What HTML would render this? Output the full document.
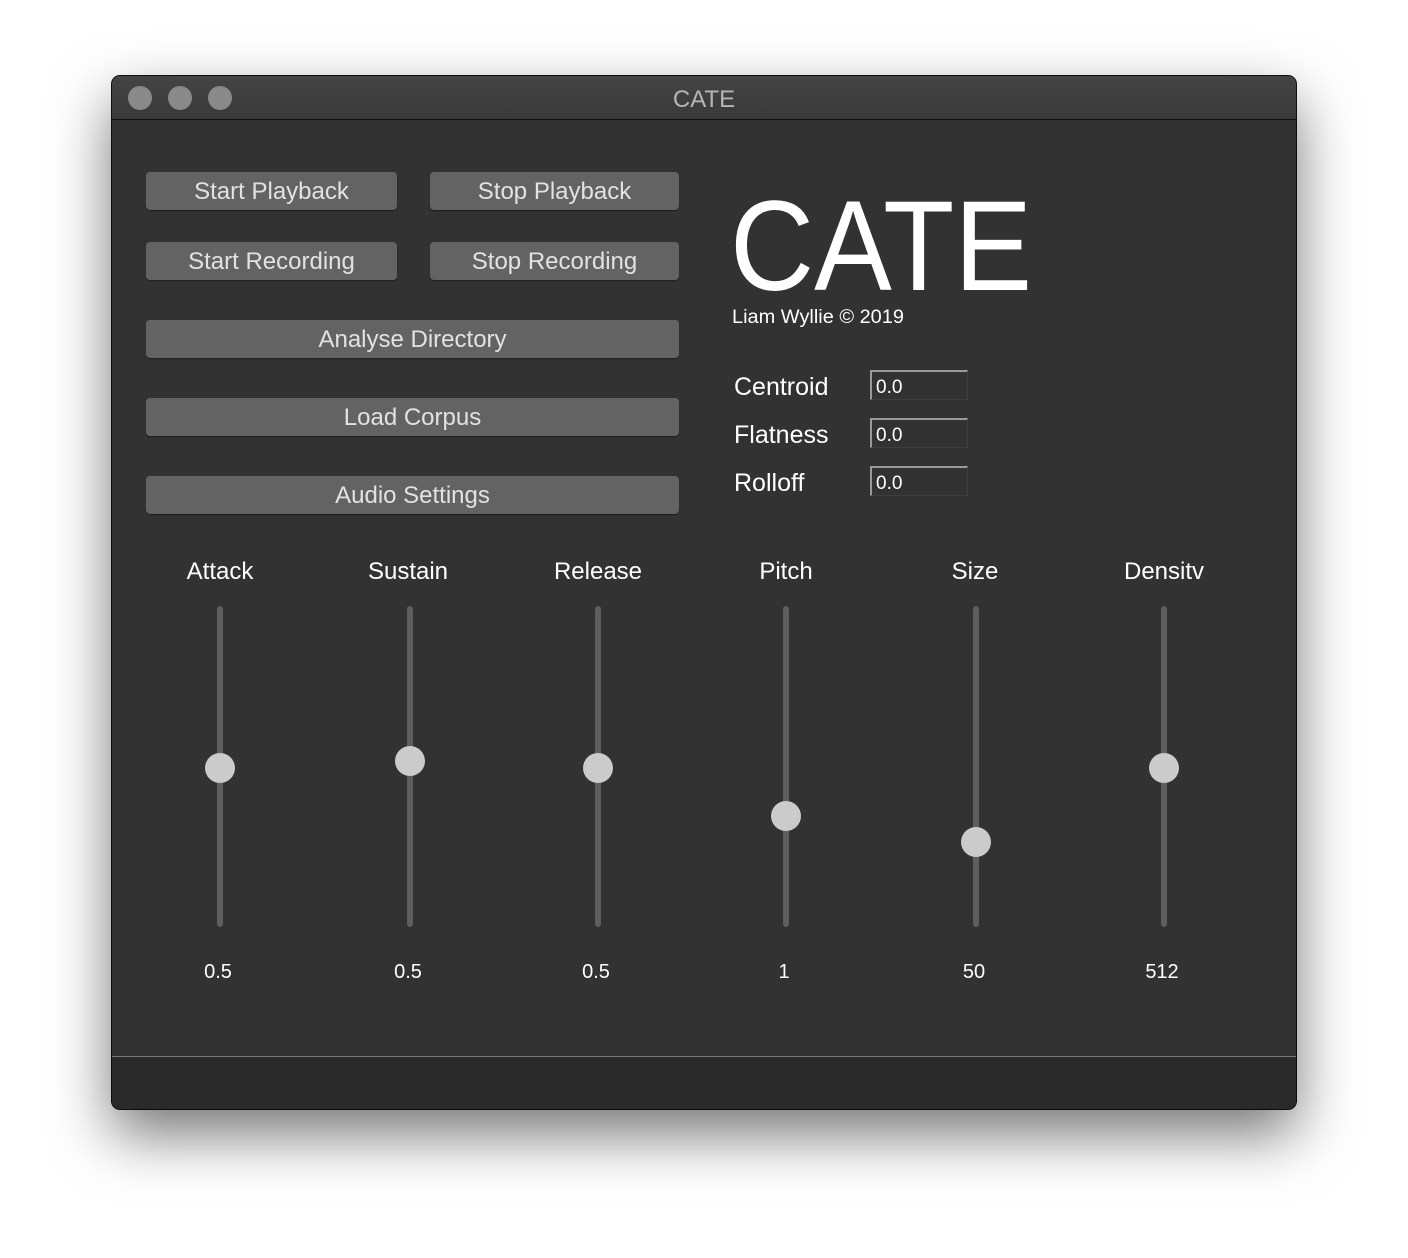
<!DOCTYPE html>
<html><head><style>
body{margin:0;width:1408px;height:1258px;background:#fff;position:relative;overflow:hidden;font-family:"Liberation Sans",sans-serif}
.win{position:absolute;left:112px;top:76px;width:1184px;height:1033px;background:#323232;border-radius:8px;box-shadow:0 25px 60px rgba(0,0,0,.55),0 0 0 1px #111;overflow:hidden}
.tb{position:absolute;left:0;top:0;width:1184px;height:43px;background:linear-gradient(#444,#3a3a3a);border-bottom:1px solid #111}
.dot{position:absolute;top:10px;width:24px;height:24px;border-radius:50%;background:#8a8a8a}
.title{position:absolute;left:0;right:0;top:10px;text-align:center;color:#b5b5b5;font-size:24px}
.btn{position:absolute;height:38px;background:#636363;border-radius:4px;color:#e2e2e2;font-size:24px;line-height:40px;text-align:center;box-shadow:0 1px 1px rgba(0,0,0,.4)}
.t{position:absolute;color:#fff}
.fld{position:absolute;left:758px;width:98px;height:30px;border-top:2px solid #999;border-left:2px solid #999;border-right:1px solid #3e3e3e;border-bottom:1px solid #3e3e3e;color:#fff;font-size:19px;line-height:31px;padding-left:4px;box-sizing:border-box}
.lbl{position:absolute;width:160px;text-align:center;color:#fff;font-size:24px;top:482px}
.val{position:absolute;width:160px;text-align:center;color:#fff;font-size:20px;top:885px}
.trk{position:absolute;top:530px;width:6px;height:321px;background:#5e5e5e;border-radius:3px}
.th{position:absolute;width:30px;height:30px;border-radius:50%;background:#cbcbcb}
.bot{position:absolute;left:0;top:980px;width:1184px;height:53px;background:#2a2a2a;border-top:1px solid #777}
</style></head><body>
<div class="win">
<div class="tb"><div class="dot" style="left:16px"></div><div class="dot" style="left:56px"></div><div class="dot" style="left:96px"></div><div class="title">CATE</div></div>
<div class="btn" style="left:34px;top:96px;width:251px">Start Playback</div>
<div class="btn" style="left:318px;top:96px;width:249px">Stop Playback</div>
<div class="btn" style="left:34px;top:166px;width:251px">Start Recording</div>
<div class="btn" style="left:318px;top:166px;width:249px">Stop Recording</div>
<div class="btn" style="left:34px;top:244px;width:533px">Analyse Directory</div>
<div class="btn" style="left:34px;top:322px;width:533px">Load Corpus</div>
<div class="btn" style="left:34px;top:400px;width:533px">Audio Settings</div>
<div class="t" style="left:618px;top:98px;font-size:128px;line-height:146px;transform:scaleX(.91);transform-origin:0 0">CATE</div>
<div class="t" style="left:620px;top:231px;font-size:19px;transform:scaleX(1.05);transform-origin:0 0">Liam Wyllie © 2019</div>
<div class="t" style="left:622px;top:297px;font-size:25px">Centroid</div>
<div class="t" style="left:622px;top:345px;font-size:25px">Flatness</div>
<div class="t" style="left:622px;top:393px;font-size:25px">Rolloff</div>
<div class="fld" style="top:294px">0.0</div>
<div class="fld" style="top:342px">0.0</div>
<div class="fld" style="top:390px">0.0</div>

<div class="lbl" style="left:28px">Attack</div><div class="trk" style="left:105px"></div><div class="th" style="left:93px;top:677px"></div><div class="val" style="left:26px">0.5</div>
<div class="lbl" style="left:216px">Sustain</div><div class="trk" style="left:295px"></div><div class="th" style="left:283px;top:670px"></div><div class="val" style="left:216px">0.5</div>
<div class="lbl" style="left:406px">Release</div><div class="trk" style="left:483px"></div><div class="th" style="left:471px;top:677px"></div><div class="val" style="left:404px">0.5</div>
<div class="lbl" style="left:594px">Pitch</div><div class="trk" style="left:671px"></div><div class="th" style="left:659px;top:725px"></div><div class="val" style="left:592px">1</div>
<div class="lbl" style="left:783px">Size</div><div class="trk" style="left:861px"></div><div class="th" style="left:849px;top:751px"></div><div class="val" style="left:782px">50</div>
<div class="lbl" style="left:972px">Densitv</div><div class="trk" style="left:1049px"></div><div class="th" style="left:1037px;top:677px"></div><div class="val" style="left:970px">512</div>
<div class="bot"></div>
</div>
</body></html>
